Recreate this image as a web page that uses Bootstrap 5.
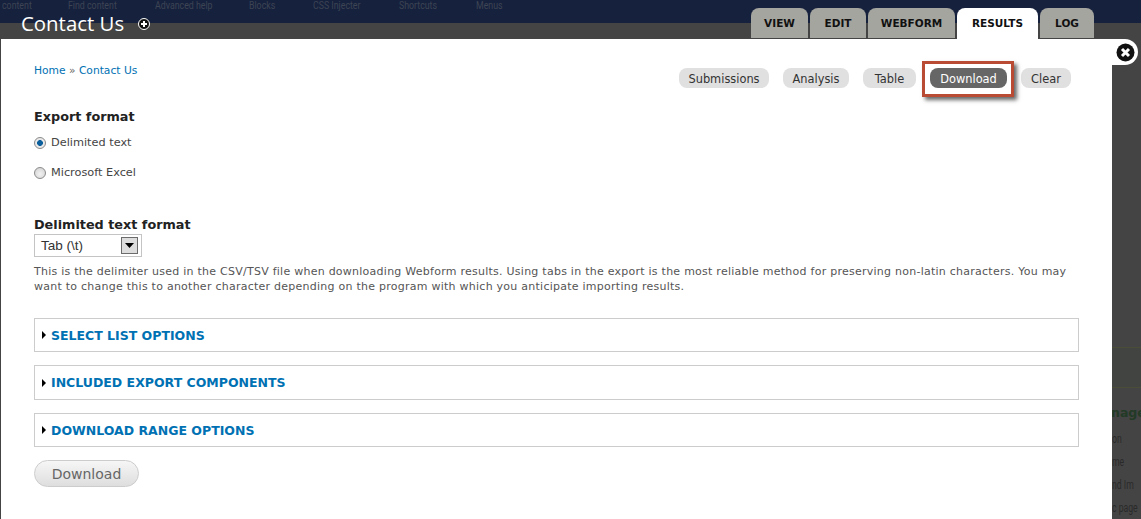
<!DOCTYPE html>
<html lang="en"><head><meta charset="utf-8"><title>Contact Us</title>
<link href="https://cdn.jsdelivr.net/npm/bootstrap@5.3.0/dist/css/bootstrap.min.css" rel="stylesheet">
<style>
html,body{height:519px;overflow:hidden}
body{background:#444;font-family:"DejaVu Sans",sans-serif;font-size:12px;color:#333}
.head-zone{height:39px;background:linear-gradient(#16213d 23px,#444 23px)}
.ghost-menu{left:0;top:0;right:0;height:11px;color:#3d4454;font-family:"Roboto",sans-serif;font-size:11px;line-height:11px;white-space:nowrap}
.ghost-menu span{position:absolute;top:0;transform:scaleX(.8);transform-origin:left}
.ghost-menu span:nth-child(1){left:2px}
.ghost-menu span:nth-child(2){left:68px}
.ghost-menu span:nth-child(3){left:155px}
.ghost-menu span:nth-child(4){left:249px}
.ghost-menu span:nth-child(5){left:313px}
.ghost-menu span:nth-child(6){left:399px}
.ghost-menu span:nth-child(7){left:476px}
.page-title{font-family:"Open Sans",sans-serif;font-size:20.4px;line-height:24px;color:#fff;margin:11px 0 0 21px}
.plus-ico{margin:18px 0 0 14px}
.tab-row{margin-top:8px;margin-right:47px;gap:2px}
.tab-item{height:30px;background:#a5a59f;color:#111;font-size:10.5px;font-weight:700;border-radius:8px 8px 0 0;padding-top:7px;line-height:16px;text-align:center}
.tab-item:nth-child(1){width:57px}
.tab-item:nth-child(2){width:56px}
.tab-item:nth-child(3){width:87px}
.tab-item:nth-child(4){width:81px}
.tab-item:nth-child(5){width:54px}
.tab-item.is-on{background:#fff;height:31px}
.sheet{width:1111px;height:480px;margin-left:1px;background:#fff;padding:0 33px}
.crumbs{font-size:10.7px;line-height:14px;color:#666;padding-top:25px}
.crumbs a,.sec-link{color:#0071b3;text-decoration:none}
.sub-tabs{gap:14px;padding-top:29px;margin-right:8px}
.sub-tab{height:20px;background:#e0e0e0;color:#333;border-radius:8px;font-size:11.4px;line-height:22px;text-align:center}
.sub-tabs>:nth-child(1){width:90px}
.sub-tabs>:nth-child(2){width:66px}
.sub-tabs>:nth-child(3){width:53px}
.sub-tabs>:nth-child(4){width:77px}
.sub-tabs>:nth-child(5){width:50px}
.sub-tab.is-on{background:#666;color:#fff}
.sub-wrap{position:relative}
.sub-wrap::after{content:"";position:absolute;inset:-7px -7px -9px -8px;border:3px solid #b94a33;box-shadow:3px 3px 4px rgba(0,0,0,.6);pointer-events:none}
.fld-title{font-size:12.8px;font-weight:700;line-height:16px;color:#222}
.title-one{margin-top:21px}
.title-two{margin-top:36px}
.radio-line{height:16px;line-height:16px;color:#444;gap:5px;font-size:11.3px}
.radio-one{margin-top:10px}
.radio-two{margin-top:14px}
.fake-radio{width:12px;height:12px;border-radius:50%;border:1px solid #8a8a8a;background:radial-gradient(circle at 50% 60%,#f2f2f2,#cfcfcf)}
.fake-radio.is-on{background:radial-gradient(circle,#0a5f9c 0,#0a5f9c 2.6px,#e9e9e9 3.2px)}
.sel-box{width:108px;height:23px;margin-top:1px;border:1px solid #c4c4c4;font-family:"Liberation Sans",sans-serif;font-size:13.5px;line-height:21px;padding-left:6px;color:#333}
.sel-arrow{width:17px;height:17px;margin-right:3px;border:1px solid #6b6b6b;background:#ddd}
.help-txt{font-size:11px;line-height:15px;color:#555;margin-top:7px;letter-spacing:.25px}
.sec-box{height:34px;border:1px solid #ccc;padding:2px 0 0 7px;font-weight:700;font-size:12.5px;gap:5px}
.sec-one{margin-top:24px}
.sec-two{margin-top:13px;height:35px}
.sec-three{margin-top:13px}
.tri{width:0;height:0;margin-top:-2px;border-left:4px solid #000;border-top:4px solid transparent;border-bottom:4px solid transparent}
.dl-btn{width:105px;height:27px;margin-top:13px;border:1px solid #ccc;border-radius:14px;background:linear-gradient(#f6f6f6,#dedede);color:#666;font-size:14px;line-height:27px;text-align:center}
.side-zone{width:29px;height:480px;overflow:hidden}
.close-tab{width:26px;height:26px;background:#fff;border-radius:0 13px 13px 0}
.ghost-band{left:0;right:0;top:308px;height:41px;background:#424441;border-top:1px solid #4a4e38;border-bottom:1px solid #4a4e38}
.ghost-h{top:365px;left:-1px;color:#223a26;font-size:12.5px;font-weight:700;line-height:18px;white-space:nowrap}
.ghost-t{left:0;color:#2a2a2a;font-family:"Roboto",sans-serif;font-size:12px;line-height:14px;white-space:nowrap;transform:scaleX(.72);transform-origin:left}
.gt-1{top:393px}.gt-2{top:416px}.gt-3{top:439px}.gt-4{top:462px}
</style></head>
<body>
<header class="head-zone position-relative d-flex justify-content-between">
  <div class="ghost-menu position-absolute">
    <span>content</span><span>Find content</span><span>Advanced help</span><span>Blocks</span><span>CSS Injecter</span><span>Shortcuts</span><span>Menus</span>
  </div>
  <div class="d-flex position-relative">
    <h1 class="page-title fw-normal">Contact Us</h1>
    <svg class="plus-ico" width="12" height="12" viewBox="0 0 12 12"><circle cx="6" cy="6" r="5.500" fill="#111" stroke="#fff"/><path d="M6 3v6M3 6h6" stroke="#fff" stroke-width="2"/></svg>
  </div>
  <nav class="tab-row d-flex position-relative">
    <div class="tab-item">VIEW</div><div class="tab-item">EDIT</div><div class="tab-item">WEBFORM</div><div class="tab-item is-on">RESULTS</div><div class="tab-item">LOG</div>
  </nav>
</header>
<div class="d-flex">
  <main class="sheet">
    <div class="d-flex justify-content-between">
      <div class="crumbs"><a href="#">Home</a> » <a href="#">Contact Us</a></div>
      <div class="sub-tabs d-flex">
        <div class="sub-tab">Submissions</div><div class="sub-tab">Analysis</div><div class="sub-tab">Table</div>
        <div class="sub-wrap"><div class="sub-tab is-on">Download</div></div>
        <div class="sub-tab">Clear</div>
      </div>
    </div>
    <div class="fld-title title-one">Export format</div>
    <div class="radio-line radio-one d-flex align-items-center"><span class="fake-radio is-on"></span>Delimited text</div>
    <div class="radio-line radio-two d-flex align-items-center"><span class="fake-radio"></span>Microsoft Excel</div>
    <div class="fld-title title-two">Delimited text format</div>
    <div class="sel-box d-flex align-items-center justify-content-between">Tab (\t)<span class="sel-arrow d-flex align-items-center justify-content-center"><svg width="9" height="5" viewBox="0 0 9 5"><path d="M0 0h9L4.500 5z" fill="#000"/></svg></span></div>
    <p class="help-txt mb-0">This is the delimiter used in the CSV/TSV file when downloading Webform results. Using tabs in the export is the most reliable method for preserving non-latin characters. You may want to change this to another character depending on the program with which you anticipate importing results.</p>
    <div class="sec-box sec-one d-flex align-items-center"><span class="tri"></span><a class="sec-link" href="#">SELECT LIST OPTIONS</a></div>
    <div class="sec-box sec-two d-flex align-items-center"><span class="tri"></span><a class="sec-link" href="#">INCLUDED EXPORT COMPONENTS</a></div>
    <div class="sec-box sec-three d-flex align-items-center"><span class="tri"></span><a class="sec-link" href="#">DOWNLOAD RANGE OPTIONS</a></div>
    <div class="dl-btn">Download</div>
  </main>
  <aside class="side-zone position-relative">
    <div class="ghost-band position-absolute"></div>
    <div class="ghost-h position-absolute">nage</div>
    <div class="ghost-t gt-1 position-absolute">on</div>
    <div class="ghost-t gt-2 position-absolute">me</div>
    <div class="ghost-t gt-3 position-absolute">nd Im</div>
    <div class="ghost-t gt-4 position-absolute">c page</div>
    <div class="close-tab d-flex align-items-center justify-content-center position-relative">
      <svg width="19" height="19" viewBox="0 0 19 19"><circle cx="9.500" cy="9.500" r="9" fill="#111"/><path d="M6 6l7 7M13 6l-7 7" stroke="#fff" stroke-width="3"/></svg>
    </div>
  </aside>
</div>
<script src="https://cdn.jsdelivr.net/npm/bootstrap@5.3.0/dist/js/bootstrap.bundle.min.js"></script>
</body></html>
